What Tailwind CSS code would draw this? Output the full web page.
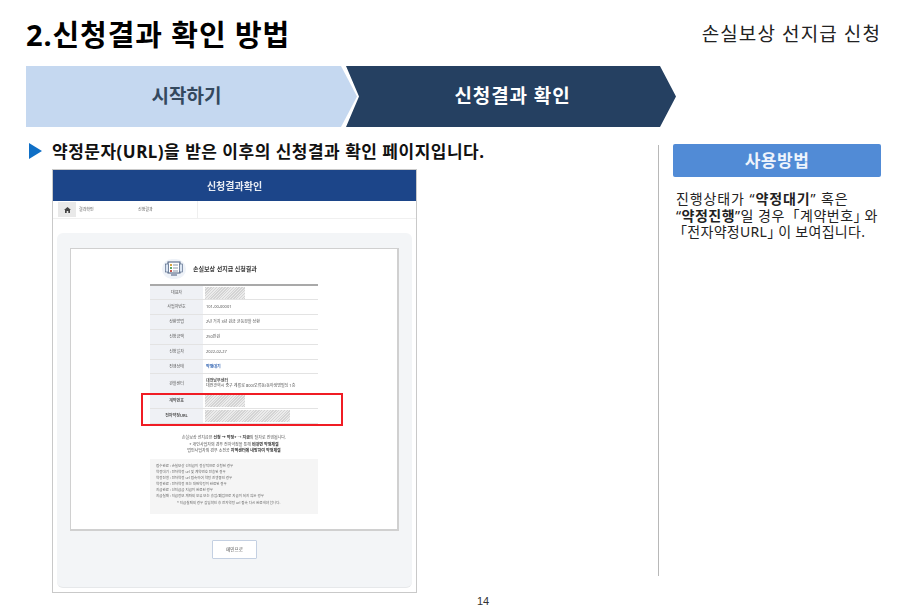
<!DOCTYPE html>
<html lang="ko">
<head>
<meta charset="UTF-8">
<title>신청결과 확인 방법</title>
<script src="https://cdn.jsdelivr.net/npm/@tailwindcss/browser@4"></script>
</head>
<body class="bg-white font-['Noto_Sans','Noto_Sans_CJK_KR',sans-serif] text-black">
<div class="relative w-[909px] h-[615px] overflow-hidden">

  <!-- title -->
  <div class="flex items-center justify-between h-[66px] pl-[26px] pr-[28px] pt-[2px]">
    <h1 class="text-[29px] font-bold leading-none tracking-[0.9px]">2.신청결과 확인 방법</h1>
    <span class="text-[19px] leading-none tracking-[1.1px] text-[#222]">손실보상 선지급 신청</span>
  </div>

  <!-- steps -->
  <div class="flex h-[61px] pl-[26px]">
    <div class="w-[331px] h-full bg-[#c5d8f0] [clip-path:polygon(0_0,315px_0,331px_50%,315px_100%,0_100%)] flex items-center justify-center text-[19px] font-bold text-[#34495e] pr-[10px] pb-[1px]">시작하기</div>
    <div class="w-[331px] h-full -ml-[12px] bg-[#254061] [clip-path:polygon(1px_0,315px_0,331px_50%,315px_100%,1px_100%,14px_50%)] flex items-center justify-center text-[19px] font-bold tracking-[0.9px] text-white pl-[4px] pb-[1px]">신청결과 확인</div>
  </div>

  <div class="flex pl-[26px] pr-[28px] pt-[14px]">
    <!-- left -->
    <div class="w-[632px] shrink-0">
      <div class="flex items-center h-[20px] gap-[10px] pl-[3px]">
        <svg width="13" height="16" viewBox="0 0 13 16"><polygon points="0,0 13,8 0,16" fill="#0f6fc6"/></svg>
        <span class="text-[17px] font-bold leading-none tracking-[0.5px] text-[#111]">약정문자(URL)을 받은 이후의 신청결과 확인 페이지입니다.</span>
      </div>

      <!-- captured page -->
      <div class="relative ml-[26px] mt-[8px] w-[365px] h-[424px] border border-[#c9c9c9] bg-white text-[4px] leading-none text-[#555]">
        <div class="h-[31px] bg-[#1c4589] flex items-center justify-center text-[10px] font-bold text-white/90 blur-[0.4px]">신청결과확인</div>
        <div class="flex items-center h-[18px] border-b border-[#f0f0f0] pl-[5px] blur-[0.4px]">
          <div class="w-[18px] h-[15px] bg-[#e9e9e9] flex items-center justify-center">
            <svg width="7" height="6" viewBox="0 0 7 6"><path d="M3.5 0 7 3H6v3H4.3V4H2.7v2H1V3H0z" fill="#444"/></svg>
          </div>
          <span class="ml-[3px] w-[59px]">결과확인</span>
          <span class="w-[59px]">신청결과</span>
          <div class="w-px h-[18px] bg-[#efefef]"></div>
        </div>

        <div class="mx-[4px] mt-[14px] h-[355px] rounded-[6px] bg-[#f3f5f7] border-b border-[#e6e8ea] px-[13px] pt-[15px]">
          <div class="h-[283px] bg-white border border-[#d0d0d0] border-r-2 border-b-2 flex flex-col items-center pt-[9px]">
            <div class="flex items-center gap-[7px] h-[21px] w-[168px] pl-[12px] blur-[0.4px]">
              <div class="w-[24px] h-[20px] rounded-full bg-[#eef2f8] flex items-center justify-center">
                <svg width="18" height="15" viewBox="0 0 18 15">
                  <rect x="3" y="1" width="12" height="11" fill="#fff" stroke="#44597a"/>
                  <rect x="0.5" y="3" width="3" height="8" fill="#dbe5f2" stroke="#44597a" stroke-width=".6"/>
                  <rect x="14.5" y="3" width="3" height="8" fill="#dbe5f2" stroke="#44597a" stroke-width=".6"/>
                  <rect x="5" y="3" width="2" height="2" fill="#d9a441"/>
                  <rect x="5" y="6" width="2" height="2" fill="#5aa469"/>
                  <rect x="5" y="9" width="2" height="2" fill="#c8574f"/>
                  <path d="M8 4h5M8 7h5M8 10h5" stroke="#8a97aa"/>
                  <path d="M6 14h6" stroke="#44597a"/>
                </svg>
              </div>
              <span class="text-[6px] font-bold text-[#333] whitespace-nowrap">손실보상 선지급 신청결과</span>
            </div>

            <!-- result table -->
            <div class="mt-[5px] w-[168px] border-t-2 border-[#a9a9a9] blur-[0.4px]">
              <div class="flex h-[14px] border-b border-[#e3e3e3]"><div class="w-[53px] bg-[#eff1f5] flex items-center justify-center">대표자</div><div class="flex-1 flex items-center pl-[2px]"><div class="w-[40px] h-[12px] bg-[repeating-linear-gradient(135deg,#d4d4d4_0,#d4d4d4_1px,#ebebeb_1px,#ebebeb_2px)]"></div></div></div>
              <div class="flex h-[15px] border-b border-[#e3e3e3]"><div class="w-[53px] bg-[#eff1f5] flex items-center justify-center">사업자번호</div><div class="flex-1 flex items-center pl-[3px]">101-00-00001</div></div>
              <div class="flex h-[15px] border-b border-[#e3e3e3]"><div class="w-[53px] bg-[#eff1f5] flex items-center justify-center">상환방법</div><div class="flex-1 flex items-center pl-[3px]">2년 거치 3년 원금 균등분할 상환</div></div>
              <div class="flex h-[15px] border-b border-[#e3e3e3]"><div class="w-[53px] bg-[#eff1f5] flex items-center justify-center">신청금액</div><div class="flex-1 flex items-center pl-[3px]">250만원</div></div>
              <div class="flex h-[15px] border-b border-[#e3e3e3]"><div class="w-[53px] bg-[#eff1f5] flex items-center justify-center">신청일자</div><div class="flex-1 flex items-center pl-[3px]">2022-02-27</div></div>
              <div class="flex h-[14px] border-b border-[#e3e3e3]"><div class="w-[53px] bg-[#eff1f5] flex items-center justify-center">진행상태</div><div class="flex-1 flex items-center pl-[3px] text-[#2b5fb0] font-bold">약정대기</div></div>
              <div class="flex h-[20px] border-b border-[#e3e3e3]"><div class="w-[53px] bg-[#eff1f5] flex items-center justify-center">관할센터</div><div class="flex-1 flex flex-col justify-center gap-[1px] pl-[3px] whitespace-nowrap"><span class="font-bold">대전남부센터</span><span>대전광역시 중구 계룡로 800(오류동)동아생명빌딩 1층</span></div></div>
              <div class="flex h-[15px] border-b border-[#e3e3e3]"><div class="w-[53px] bg-[#eff1f5] flex items-center justify-center font-bold">계약번호</div><div class="flex-1 flex items-center pl-[2px]"><div class="w-[40px] h-[12px] bg-[repeating-linear-gradient(135deg,#d4d4d4_0,#d4d4d4_1px,#ebebeb_1px,#ebebeb_2px)]"></div></div></div>
              <div class="flex h-[15px] border-b border-[#e3e3e3]"><div class="w-[53px] bg-[#eff1f5] flex items-center justify-center font-bold">전자약정URL</div><div class="flex-1 flex items-center pl-[2px]"><div class="w-[85px] h-[12px] bg-[repeating-linear-gradient(135deg,#d4d4d4_0,#d4d4d4_1px,#ebebeb_1px,#ebebeb_2px)]"></div></div></div>
            </div>

            <!-- notice -->
            <div class="mt-[12px] w-[168px] flex flex-col items-center gap-[2.5px] whitespace-nowrap blur-[0.45px]">
              <p>손실보상 선지급은 <b class="text-[#333]">신청 → 약정*</b> → <b class="text-[#333]">지급</b>의 절차로 진행됩니다.</p>
              <p>* 개인사업자의 경우 전자약정을 통해 <b class="text-[#333]">비대면 약정체결</b></p>
              <p>법인사업자의 경우 소진공 <b class="text-[#333]">지역센터에 내방하여 약정체결</b></p>
            </div>

            <!-- status legend -->
            <div class="mt-[6px] w-[168px] h-[55px] bg-[#f5f5f5] pl-[6px] pt-[5px] flex flex-col gap-[2.6px] text-[3.5px] text-[#666] whitespace-nowrap blur-[0.45px]">
              <p>접수완료 : 손실보상 선지급이 정상적으로 신청된 경우</p>
              <p>약정대기 : 전자약정 url 및 계약번호 전송된 경우</p>
              <p>약정진행 : 전자약정 url 접속하여 약정 진행중인 경우</p>
              <p>약정완료 : 전자약정 또는 대면약정이 완료된 경우</p>
              <p>지급완료 : 선지급금 지급이 완료된 경우</p>
              <p>지급실패 : 지급정보 계좌의 오류 또는 휴업/폐업으로 지급이 되지 않은 경우</p>
              <p class="pl-[21px]">* 지급실패의 경우 감담확인 후 전자약정 url 접속 다시 완료해야 합니다.</p>
            </div>
          </div>

          <div class="flex justify-center mt-[9px]">
            <div class="w-[45px] h-[19px] bg-white border border-[#c4d0e2] rounded-[1px] flex items-center justify-center text-[4.5px] blur-[0.3px]">메인으로</div>
          </div>
        </div>

        <!-- highlight -->
        <div class="absolute left-[88px] top-[223px] w-[202px] h-[33px] border-2 border-[#f01c24]"></div>
      </div>
    </div>

    <!-- right -->
    <div class="flex pt-[4px]">
      <div class="w-px h-[431px] bg-[#b8b8b8]"></div>
      <div class="ml-[14px] w-[208px]">
        <div class="h-[33px] -mt-[1px] rounded-[2px] bg-[#518bd6] flex items-center justify-center text-[17px] font-bold tracking-[0.5px] text-[#eef4fc]">사용방법</div>
        <div class="mt-[14px] pl-[3px] text-[14px] leading-[16.5px] text-[#222] whitespace-nowrap">
          <p class="h-[16.5px] tracking-[0.9px]">진행상태가 “<b>약정대기</b>” 혹은</p>
          <p class="h-[16.5px] tracking-[0.5px]">“<b>약정진행</b>”일 경우<span class="tracking-[-3px]"> </span>「계약번호<span class="tracking-[-3px]">」</span>와</p>
          <p class="h-[16.5px] tracking-[0.3px] -ml-[3px]">「전자약정URL<span class="tracking-[-3px]">」</span>이 보여집니다.</p>
        </div>
      </div>
    </div>
  </div>

  <div class="absolute left-[477px] top-[595px] text-[11px] leading-[12px] font-['Liberation_Sans',sans-serif] text-[#333]">14</div>
</div>
</body>
</html>
